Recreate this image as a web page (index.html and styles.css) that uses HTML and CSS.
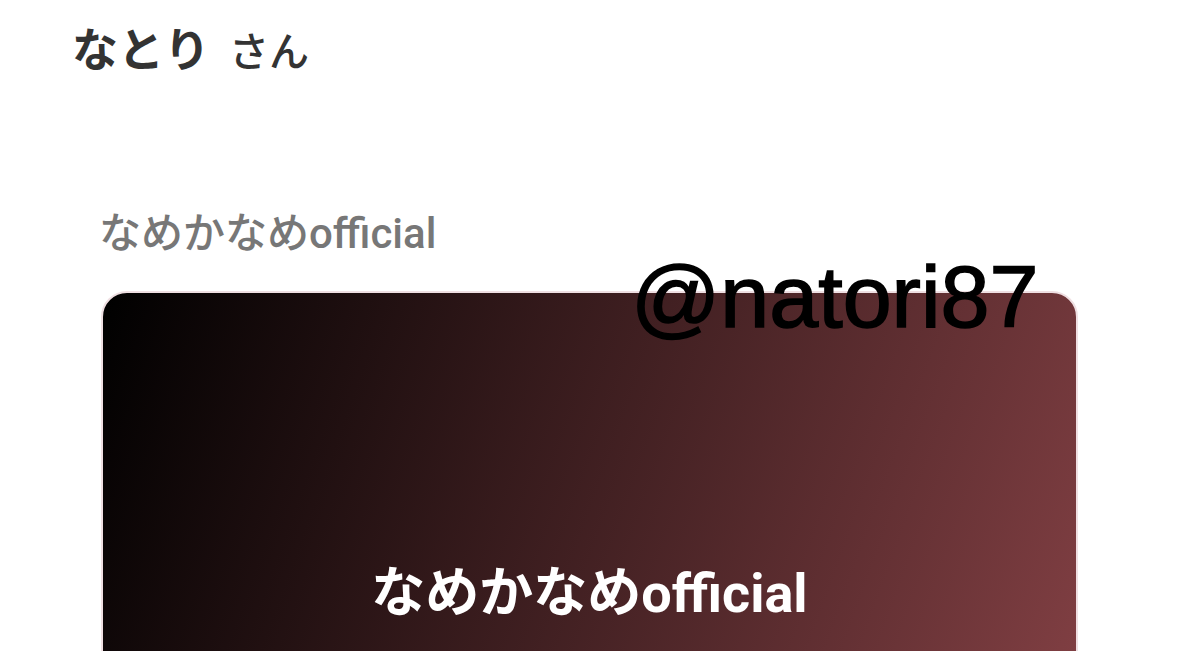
FILE: index.html
```html
<!DOCTYPE html>
<html lang="ja">
<head>
<meta charset="utf-8">
<link rel="stylesheet" href="styles.css">
</head>
<body>
<header class="greeting">
  <span class="name">なとり</span><span class="honorific">さん</span>
</header>
<main class="content">
  <div class="label">なめかなめofficial</div>
  <div class="card-wrap">
    <div class="card">
      <div class="card-title">なめかなめofficial</div>
    </div>
    <div class="handle">@natori87</div>
  </div>
</main>
</body>
</html>
```
FILE: styles.css
```css
html, body {
  margin: 0;
  padding: 0;
  background: #ffffff;
  overflow: hidden;
  height: 651px;
}
body {
  font-family: Roboto, "Noto Sans CJK JP", sans-serif;
}
.greeting {
  padding: 22px 0 0 72px;
  display: flex;
  align-items: baseline;
  gap: 19px;
  color: #333333;
  line-height: 56px;
}
.name {
  font-size: 46px;
  font-weight: 700;
}
.honorific {
  font-size: 40px;
  font-weight: 500;
}
.content {
  padding: 128px 101px 0 101px;
}
.label {
  font-size: 42px;
  font-weight: 500;
  color: #777777;
  line-height: 50px;
  margin-left: -2px;
}
.card-wrap {
  position: relative;
  margin-top: 32px;
}
.card {
  height: 460px;
  border-radius: 26px;
  border: 2px solid #efdfe2;
  background: linear-gradient(110deg, #000000 0%, #834044 100%);
  display: flex;
  justify-content: center;
  padding-top: 269px;
  box-sizing: border-box;
}
.card-title {
  color: #ffffff;
  font-size: 54px;
  font-weight: 700;
  line-height: 64px;
}
.handle {
  position: absolute;
  left: 530px;
  top: -44px;
  font-family: "Liberation Sans", Arial, sans-serif;
  font-size: 88px;
  line-height: 100px;
  color: #000000;
  -webkit-text-stroke: 1.6px #000000;
}
```
